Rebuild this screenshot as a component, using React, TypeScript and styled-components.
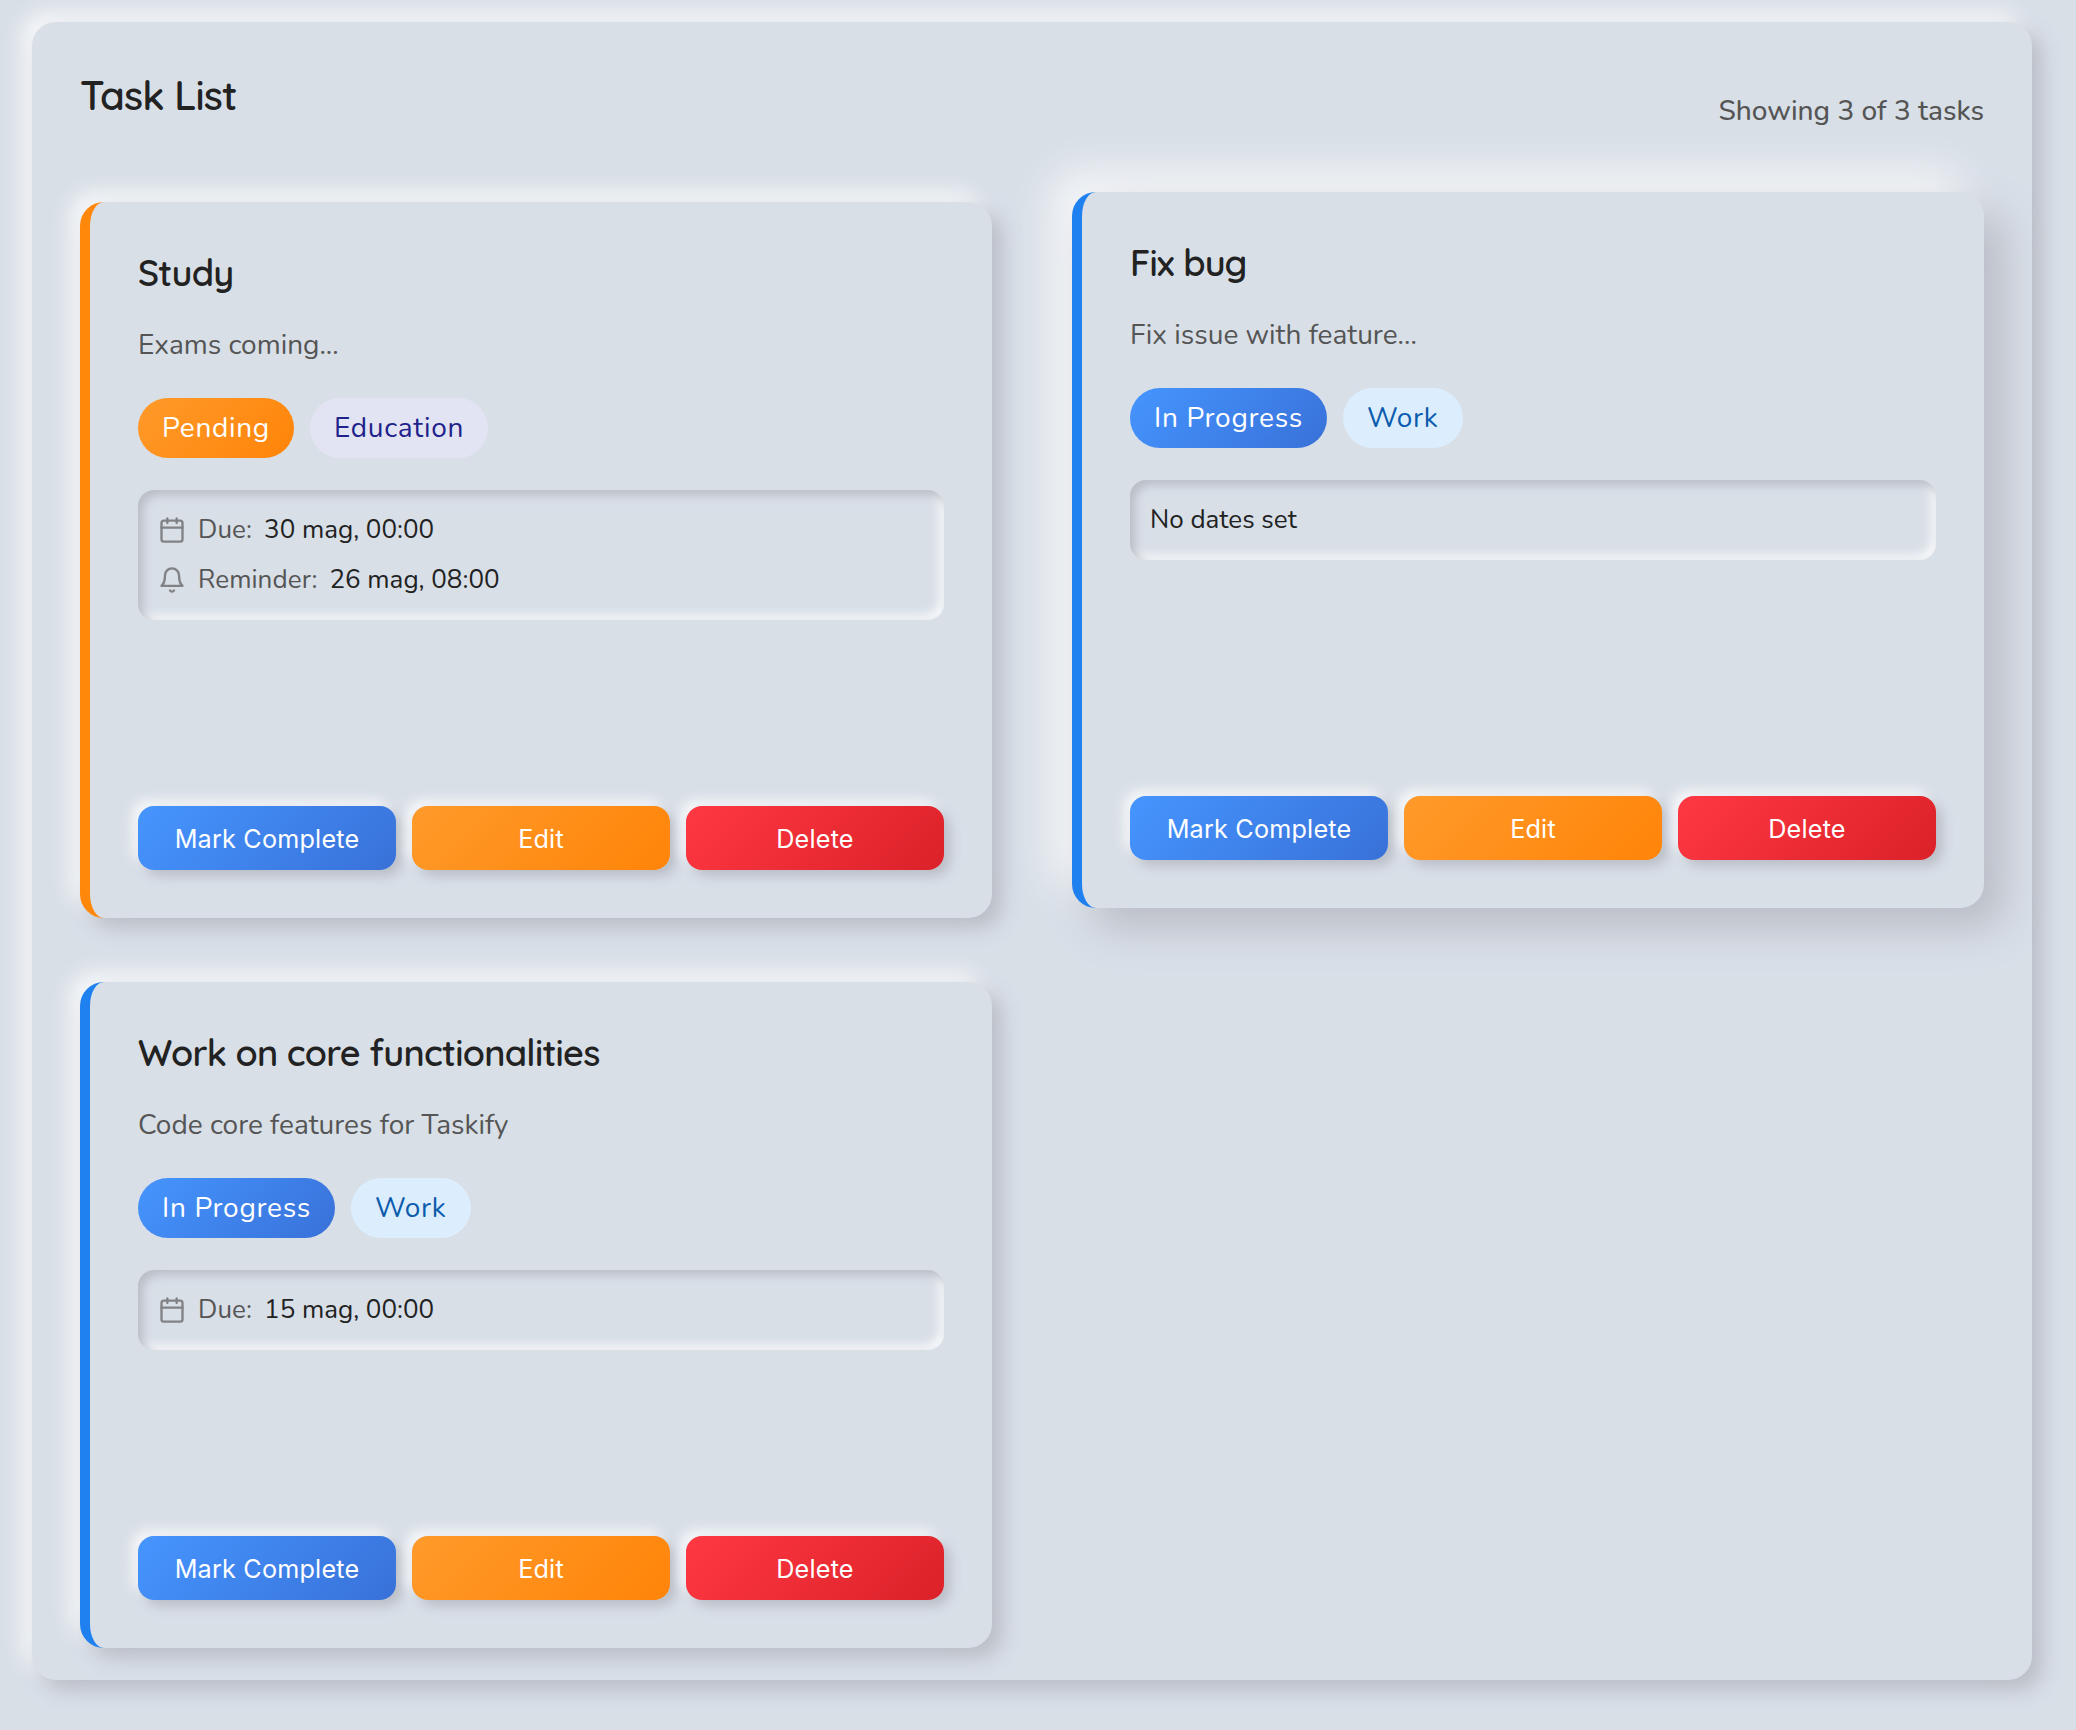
import React from 'react';
import styled, { createGlobalStyle, css } from 'styled-components';

const base = '#d8dfe7';
const dark = '#babdc6';
const light = '#f7f8fa';

const GlobalStyle = createGlobalStyle`
  * { box-sizing: border-box; }
  body {
    margin: 0;
    background: ${base};
    color: #222;
    font-family: Nunito, Lato, "Noto Sans", sans-serif;
  }
`;

const heading = css`
  margin: 0;
  font-family: Quicksand, Inter, sans-serif;
  font-weight: 600;
  line-height: 1.25;
  letter-spacing: -0.02em;
  white-space: nowrap;
`;

const Page = styled.div`
  min-height: 1730px;
  padding: 22px 44px 50px 32px;
`;

const Panel = styled.section`
  padding: 48px 48px 32px;
  border-radius: 24px;
  background: ${base};
  box-shadow: 10px 10px 20px ${dark}, -10px -10px 20px ${light};
`;

const Header = styled.header`
  display: flex;
  justify-content: space-between;
  height: 60px;
  margin-bottom: 72px;
`;

const Title = styled.h1`
  ${heading}
  font-size: 40px;
`;

const Count = styled.span`
  align-self: flex-end;
  color: #555;
  font-size: 28px;
  font-weight: 500;
  line-height: 38px;
`;

const Grid = styled.div`
  display: grid;
  grid-template-columns: 1fr 1fr;
  gap: 64px 80px;
`;

const Card = styled.article<{ $accent: string; $raised?: boolean }>`
  display: flex;
  flex-direction: column;
  padding: 48px;
  border-left: 10px solid ${p => p.$accent};
  border-radius: 24px;
  background: ${base};
  box-shadow: 10px 10px 20px ${dark}, -10px -10px 20px ${light};
  ${p => p.$raised && css`
    transform: translateY(-10px);
    box-shadow: 20px 20px 40px ${dark}, -20px -20px 40px ${light};
  `}
`;

const CardTitle = styled.h2`
  ${heading}
  font-size: 36px;
`;

const Description = styled.p`
  margin: 28px 0 31px;
  color: #555;
  font-size: 28px;
  line-height: 44px;
`;

const Tags = styled.div`
  display: flex;
  gap: 16px;
  margin-bottom: 32px;
`;

const tagStyles = {
  pending: 'background: linear-gradient(135deg, #ff9a2a, #ff8409); color: #fff;',
  progress: 'background: linear-gradient(135deg, #4695ff, #3871d8); color: #fff;',
  education: 'background: #e2e4f3; color: #1f238b;',
  work: 'background: #dceefd; color: #0b5cad;',
};
type TagKind = keyof typeof tagStyles;

const Tag = styled.span<{ $kind: TagKind }>`
  height: 60px;
  padding: 0 24px;
  border-radius: 30px;
  font-size: 28px;
  line-height: 60px;
  letter-spacing: 0.025em;
  ${p => tagStyles[p.$kind]}
`;

const Dates = styled.div`
  display: flex;
  flex-direction: column;
  gap: 10px;
  padding: 20px;
  border-radius: 16px;
  box-shadow: inset 5px 5px 10px ${dark}, inset -5px -5px 10px ${light};
  font-size: 26px;
  line-height: 40px;
`;

const DateRow = styled.div`
  display: flex;
  align-items: center;
  height: 40px;
`;

const DateLabel = styled.span`
  margin: 0 12px;
  color: #555;
  letter-spacing: 0.1px;
`;

const DateValue = styled.span`
  color: #222;
`;

const Icon = styled.svg`
  width: 28px;
  height: 28px;
  fill: none;
  stroke: #808285;
  stroke-width: 2;
  stroke-linecap: round;
  stroke-linejoin: round;
`;

const Actions = styled.div`
  display: grid;
  grid-template-columns: repeat(3, 1fr);
  gap: 16px;
  margin-top: auto;
  padding-top: 186px;
`;

const Button = styled.button<{ $from: string; $to: string }>`
  height: 64px;
  padding: 2px 0 0;
  border: 0;
  border-radius: 16px;
  background: linear-gradient(135deg, ${p => p.$from}, ${p => p.$to});
  box-shadow: 6px 6px 12px ${dark}, -6px -6px 12px ${light};
  color: #fff;
  font: 400 25.2px Inter, sans-serif;
  letter-spacing: 0.2px;
`;

const CalendarIcon = () => (
  <Icon viewBox="0 0 24 24">
    <rect x="3" y="4" width="18" height="18" rx="2" />
    <path d="M16 2v4M8 2v4M3 10h18" />
  </Icon>
);

const BellIcon = () => (
  <Icon viewBox="0 0 24 24">
    <path d="M18 8A6 6 0 0 0 6 8c0 7-3 9-3 9h18s-3-2-3-9" />
    <path d="M13.73 21a2 2 0 0 1-3.46 0" />
  </Icon>
);

interface Task {
  title: string;
  description: string;
  accent: string;
  raised?: boolean;
  tags: { text: string; kind: TagKind }[];
  due?: string;
  reminder?: string;
}

const tasks: Task[] = [
  {
    title: 'Study',
    description: 'Exams coming...',
    accent: '#ff8709',
    tags: [
      { text: 'Pending', kind: 'pending' },
      { text: 'Education', kind: 'education' },
    ],
    due: '30 mag, 00:00',
    reminder: '26 mag, 08:00',
  },
  {
    title: 'Fix bug',
    description: 'Fix issue with feature...',
    accent: '#1f80f0',
    raised: true,
    tags: [
      { text: 'In Progress', kind: 'progress' },
      { text: 'Work', kind: 'work' },
    ],
  },
  {
    title: 'Work on core functionalities',
    description: 'Code core features for Taskify',
    accent: '#1f80f0',
    tags: [
      { text: 'In Progress', kind: 'progress' },
      { text: 'Work', kind: 'work' },
    ],
    due: '15 mag, 00:00',
  },
];

const TaskCard = ({ task }: { task: Task }) => (
  <Card $accent={task.accent} $raised={task.raised}>
    <CardTitle>{task.title}</CardTitle>
    <Description>{task.description}</Description>
    <Tags>
      {task.tags.map(tag => (
        <Tag key={tag.text} $kind={tag.kind}>{tag.text}</Tag>
      ))}
    </Tags>
    <Dates>
      {task.due && (
        <DateRow><CalendarIcon /><DateLabel>Due:</DateLabel><DateValue>{task.due}</DateValue></DateRow>
      )}
      {task.reminder && (
        <DateRow><BellIcon /><DateLabel>Reminder:</DateLabel><DateValue>{task.reminder}</DateValue></DateRow>
      )}
      {!task.due && !task.reminder && <DateRow><DateValue>No dates set</DateValue></DateRow>}
    </Dates>
    <Actions>
      <Button $from="#4695ff" $to="#3871d8">Mark Complete</Button>
      <Button $from="#ff9a2a" $to="#ff8409">Edit</Button>
      <Button $from="#ff3842" $to="#db2129">Delete</Button>
    </Actions>
  </Card>
);

export default function App() {
  return (
    <Page>
      <GlobalStyle />
      <Panel>
        <Header>
          <Title>Task List</Title>
          <Count>Showing 3 of 3 tasks</Count>
        </Header>
        <Grid>
          {tasks.map(task => <TaskCard key={task.title} task={task} />)}
        </Grid>
      </Panel>
    </Page>
  );
}
